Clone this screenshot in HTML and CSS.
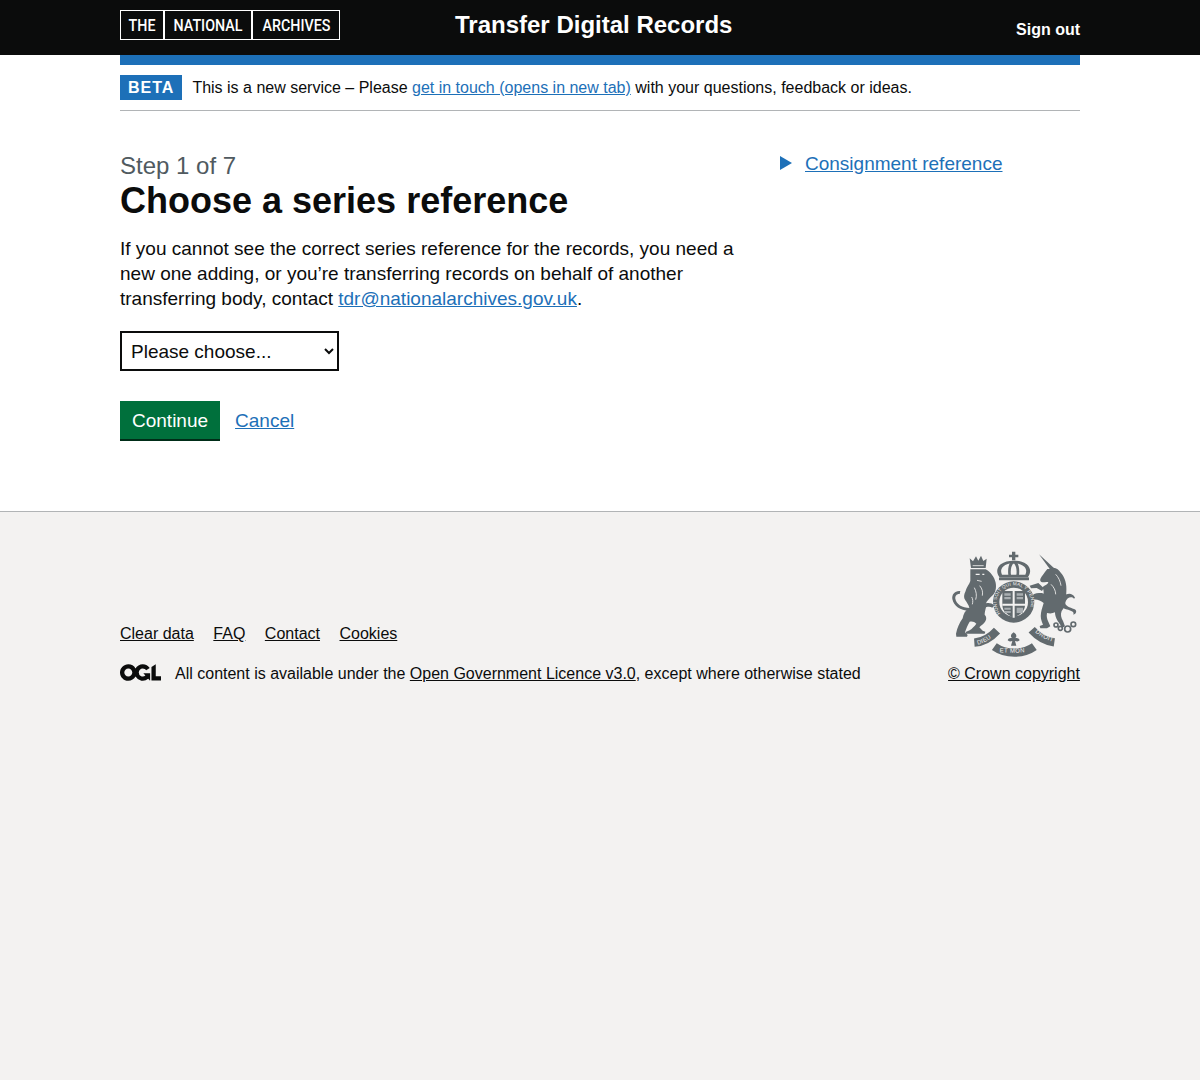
FILE: index.html
```html
<!DOCTYPE html>
<html lang="en">
<head>
<meta charset="utf-8">
<title>Choose a series reference - Transfer Digital Records</title>
<link rel="stylesheet" href="styles.css">
</head>
<body>
<header class="site-header">
  <div class="wrap header-row">
    <div class="tna-logo"><div class="tna-cell tna-the"><span>THE</span></div><div class="tna-cell"><span>NATIONAL</span></div><div class="tna-cell"><span>ARCHIVES</span></div></div>
    <div class="service-name">Transfer Digital Records</div>
    <a class="sign-out" href="#">Sign out</a>
  </div>
</header>
<div class="wrap">
  <div class="blue-bar"></div>
  <div class="phase">
    <strong class="phase-tag">BETA</strong>
    <span>This is a new service – Please <a class="link" href="#">get in touch (opens in new tab)</a> with your questions, feedback or ideas.</span>
  </div>
  <main class="columns">
    <div class="col-main">
      <span class="caption">Step 1 of 7</span>
      <h1 class="title">Choose a series reference</h1>
      <p class="body">If you cannot see the correct series reference for the records, you need a new one adding, or you’re transferring records on behalf of another transferring body, contact <a class="link" href="#">tdr@nationalarchives.gov.uk</a>.</p>
      <select class="select"><option>Please choose...</option></select>
      <div class="actions">
        <button class="button" type="button">Continue</button>
        <a class="link cancel" href="#">Cancel</a>
      </div>
    </div>
    <aside class="col-side">
      <span class="triangle"></span>
      <a class="link" href="#">Consignment reference</a>
    </aside>
  </main>
</div>
<footer class="footer">
  <div class="wrap footer-row">
    <div class="footer-meta">
      <ul class="footer-links">
        <li><a href="#">Clear data</a></li>
        <li><a href="#">FAQ</a></li>
        <li><a href="#">Contact</a></li>
        <li><a href="#">Cookies</a></li>
      </ul>
      <div class="licence">
        <svg class="ogl" viewBox="0 0 483.2 195.7" aria-hidden="true"><path fill="currentColor" d="M421.5 142.8V.1l-50.7 32.3v161.1h112.4v-50.7zm-122.3-9.6A47.12 47.12 0 0 1 221 97.8c0-26 21.1-47.1 47.1-47.1 16.7 0 31.4 8.7 39.7 21.8l42.7-27.2A97.63 97.63 0 0 0 268.1 0c-36.5 0-68.3 20.1-85.1 49.7A98 98 0 0 0 97.8 0C43.9 0 0 43.9 0 97.8s43.9 97.8 97.8 97.8c36.5 0 68.3-20.1 85.1-49.7a97.76 97.76 0 0 0 149.6 25.4l19.4 22.2h3v-87.8h-80l24.3 27.5zM97.8 145c-26 0-47.1-21.1-47.1-47.1s21.1-47.1 47.1-47.1 47.2 21 47.2 47S123.8 145 97.8 145"/></svg>
        <span>All content is available under the <a href="#">Open Government Licence v3.0</a>, except where otherwise stated</span>
      </div>
    </div>
    <div class="crown">
      <svg class="crest" viewBox="0 0 450 345" aria-hidden="true">
        <defs>
          <path id="garter-arc" d="M179 207a52 52 0 1 1 80-1"/>
          <path id="ribbon-left" d="M110 299c18-4 36-14 52-30"/>
          <path id="ribbon-mid" d="M176 322c28 2 60 2 88-2"/>
          <path id="ribbon-right" d="M282 262c16 13 32 22 56 30"/>
        </defs>
        <!-- lion crown -->
        <path class="ink" d="M86 40l10 9 9-15 7 13 8-15 7 16 10-7-3 28H90z"/>
        <path class="gap" d="M95 62h33"/>
        <!-- lion head, mane and body -->
        <path class="ink" d="M88 73h46c14 8 26 22 30 40 3 16-1 30-9 38-10 10-18 18-20 24 10-2 18 0 24 6l-5 7c-6-3-12-3-19-1-2 8-4 16-4 22 6 6 6 14 2 20-4 8-12 12-18 18l10 10 8 3-2 6H76l-2-5 12-5c8-6 14-12 20-20-6-6-12-8-20-6-6 10-10 20-14 32l8 8-2 5H46l-1-9c4-18 10-32 20-46 2-14 8-24 20-32-2-8-8-16-12-22-6-8-4-18 0-26 4-14 12-22 15-32z"/>
        <path class="ink" d="M84 198c-26-2-46-14-50-36-2-14 8-26 24-24l-2 9c-9-1-14 6-13 14 3 17 20 27 44 28z"/>
        <path class="gap" d="M108 106l14 3M116 122c8 10 10 18 8 30M100 128c6 12 8 24 4 36M92 156c4 6 4 14 2 22"/>
        <path class="gap-thin" d="M104 88h12M124 88h6"/>
        <!-- unicorn -->
        <path class="ink" d="M294 28l44 40-10 6z"/>
        <path class="ink" d="M325 72c15-10 27 0 35 12 12 14 18 34 16 56 0 10-2 15-4 20 2 15-2 30-10 38-4 10-2 20 4 30l6 16-8 4-14-20c-6-10-8-18-8-26-8 4-16 4-24 2-2 10 0 18 4 26l6 14-10 6h-20l-2-7 10-4c-6-13-8-23-6-35 2-12 6-22 8-30-10-8-20-12-32-10l-6-8c4-8 14-12 24-12 6 0 10 0 14 2 0-6 0-14-4-18 6-8 16-8 18-16-4-2-12 0-18 0-4-1-8-4-6-10 4-8 12-18 21-30z"/>
        <path class="ink" d="M358 172c6-24 32-36 44-14l-3 3c-8-9-22-3-26 11-2 11 14 16 26 20 11 4 7 15-2 17 2-6 0-10-8-12-20-6-36-10-31-25z"/>
        <path class="ink" d="M266 122l26-8 16 15-5 9-16-9-17 1z"/>
        <path class="gap" d="M344 88c8 8 14 20 16 34M330 118c8 8 14 18 14 30"/>
        <!-- centre crown -->
        <path class="ink" d="M213 20h10v9h9v8h-9v9h-10v-9h-9v-8h9z"/>
        <path class="ink" d="M218 47c16 0 28 3 39 11 12 10 14 24 4 38H175c-10-14-8-28 4-38 11-8 23-11 39-11zm0 7c-12 0-24 4-32 11-7 7-7 16-3 24h70c4-8 4-17-3-24-8-7-20-11-32-11z"/>
        <path class="ink" d="M208 52h20c6 8 8 24 6 38h-8c2-14 0-26-6-34h-4c-6 8-8 20-6 34h-8c-2-14 0-30 6-38z"/>
        <rect class="ink" x="174" y="97" width="90" height="9" rx="2"/>
        <!-- garter and shield -->
        <circle class="ink" cx="218" cy="171" r="62"/>
        <circle class="paper" cx="218" cy="171" r="43"/>
        <path class="ink" d="M184 138h68v42c0 20-17 30-34 38-17-8-34-18-34-38z"/>
        <path class="paper" d="M215 138h6v80h-6zM184 176h68v6h-68z"/>
        <path class="tint" d="M190 145h19v7h-19zm0 11h19v7h-19zm37-11h19v7h-19zm0 11h19v7h-19zm-37 32h19v6h-19zm0 10h19v6h-19zm37-10h19v16h-19z"/>
        <text class="crest-text garter-text"><textPath href="#garter-arc" startOffset="2">HONI SOIT QUI MAL Y PENSE</textPath></text>
        <!-- scroll -->
        <path class="ribbon" d="M100 293c28-2 48-14 68-36"/>
        <path class="ribbon" d="M160 305c34 24 86 24 120 0"/>
        <path class="ribbon" d="M272 254c18 20 40 34 68 38"/>
        <path class="ink" d="M218 262c10 6 10 14 4 18 6-2 12 0 14 6-3 4-8 4-14 2l4 14h-16l4-14c-6 2-11 2-14-2 2-6 8-8 14-6-6-4-6-12 4-18z"/>
        <text class="crest-text"><textPath href="#ribbon-left">DIEU</textPath></text>
        <text class="crest-text"><textPath href="#ribbon-mid">ET MON</textPath></text>
        <text class="crest-text"><textPath href="#ribbon-right">DROIT</textPath></text>
        <!-- chain -->
        <g class="chain">
          <circle cx="345" cy="240" r="6"/><circle cx="358" cy="250" r="6"/><circle cx="380" cy="252" r="9"/><circle cx="397" cy="238" r="7"/>
        </g>
      </svg>
      <a href="#">© Crown copyright</a>
    </div>
  </div>
</footer>
</body>
</html>
```
FILE: styles.css
```css
* { box-sizing: border-box; }
html, body { margin: 0; padding: 0; }
body {
  font-family: "Liberation Sans", Arial, sans-serif;
  color: #0b0c0c;
  background: #fff;
  min-height: 1080px;
  display: flex;
  flex-direction: column;
}
.wrap { width: 960px; margin: 0 auto; }

.site-header { background: #0b0c0c; height: 55px; color: #fff; }
.header-row { display: flex; align-items: flex-start; height: 55px; }
.tna-logo {
  display: flex;
  margin-top: 10px;
  height: 30px;
  width: 220px;
  border: 1px solid #fff;
  font-family: Roboto, sans-serif;
  font-weight: 500;
  font-size: 17px;
  line-height: 28px;
}
.tna-cell { width: 88px; text-align: center; border-left: 2px solid #fff; }
.tna-cell span { display: inline-block; transform: scaleX(.84); }
.tna-the { width: 42px; border-left: 0; }
.service-name { font-size: 24px; line-height: 30px; font-weight: 700; margin-top: 10px; margin-left: 115px; }
.sign-out { color: #fff; font-weight: 700; font-size: 16px; line-height: 20px; margin-top: 20px; margin-left: auto; text-decoration: none; }

.blue-bar { height: 10px; background: #1d70b8; }
.phase { display: flex; align-items: center; gap: 10px; padding: 10px 0; height: 46px; border-bottom: 1px solid #b1b4b6; font-size: 16px; line-height: 25px; }
.phase-tag { background: #1d70b8; color: #fff; padding: 0 8px; height: 25px; font-size: 16px; line-height: 25px; letter-spacing: 1px; }
.link { color: #1d70b8; text-decoration: underline; }

.columns { display: flex; gap: 40px; padding-top: 40px; padding-bottom: 70px; }
.col-main { width: 620px; }
.col-side { flex: 1; display: flex; align-items: flex-start; gap: 13px; font-size: 19px; line-height: 25px; }
.triangle { width: 0; height: 0; margin-top: 5px; border-left: 12px solid #1d70b8; border-top: 7px solid transparent; border-bottom: 7px solid transparent; }
.caption { display: block; font-size: 24px; line-height: 30px; color: #505a5f; }
.title { margin: 0 0 15px; font-size: 36px; line-height: 40px; font-weight: 700; }
.body { margin: 0 0 20px; font-size: 19px; line-height: 25px; }
.select {
  display: block;
  width: 219px;
  height: 40px;
  padding: 5px;
  border: 2px solid #0b0c0c;
  border-radius: 0;
  background: #fff;
  color: #0b0c0c;
  font-family: inherit;
  font-size: 19px;
  margin-bottom: 30px;
}
.actions { display: flex; align-items: center; gap: 15px; font-size: 19px; line-height: 25px; }
.cancel { margin-bottom: 2px; }
.button {
  height: 40px;
  padding: 0 12px;
  border: 0;
  border-bottom: 2px solid #002d18;
  background: #00703c;
  color: #fff;
  font-family: inherit;
  font-size: 19px;
  line-height: 25px;
}

.footer { flex: 1; background: #f3f2f1; border-top: 1px solid #b1b4b6; padding-top: 33px; font-size: 16px; line-height: 20px; }
.footer a { color: #0b0c0c; }
.footer-row { display: flex; justify-content: space-between; align-items: flex-end; }
.footer-links { list-style: none; margin: 0 0 20px; padding: 0; display: flex; gap: 19.5px; }
.licence { display: flex; align-items: center; gap: 14px; }
.ogl { width: 41px; height: 17px; color: #0b0c0c; display: block; margin-bottom: 3px; }
.crown { display: flex; flex-direction: column; align-items: center; width: 132px; }
.crest { display: block; flex: none; width: 150px; height: 115px; margin: 0 -10.5px 4px -7.5px; }
.ink { fill: #626a6e; }
.paper { fill: #f3f2f1; }
.tint { fill: #a9aeb1; }
.gap { fill: none; stroke: #f3f2f1; stroke-width: 2.5; }
.gap-thin { fill: none; stroke: #f3f2f1; stroke-width: 4; }
.ribbon { fill: none; stroke: #626a6e; stroke-width: 25; }
.chain { fill: none; stroke: #626a6e; stroke-width: 5; }
.crest-text { fill: #f3f2f1; font-family: "Liberation Sans", sans-serif; font-size: 18px; letter-spacing: 1px; }
.garter-text { font-size: 14px; letter-spacing: .6px; }
```
